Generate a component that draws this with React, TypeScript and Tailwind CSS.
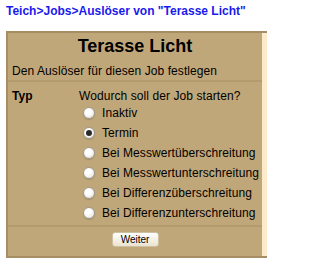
import React from "react";

const options = [
  { label: "Inaktiv", checked: false },
  { label: "Termin", checked: true },
  { label: "Bei Messwertüberschreitung", checked: false },
  { label: "Bei Messwertunterschreitung", checked: false },
  { label: "Bei Differenzüberschreitung", checked: false },
  { label: "Bei Differenzunterschreitung", checked: false },
];

function Radio({ checked }: { checked: boolean }) {
  return (
    <span className="flex h-[12px] w-[12px] shrink-0 items-center justify-center rounded-full border border-[#a09a90] bg-[radial-gradient(circle_at_40%_35%,#ffffff_30%,#dedbd4)] shadow-[0_1px_1px_rgba(0,0,0,0.15)]">
      {checked && <span className="h-[6px] w-[6px] rounded-full bg-[#2a2a2a]" />}
    </span>
  );
}

export default function App() {
  return (
    <div className="h-[266px] w-[267px] overflow-hidden bg-white font-['Liberation_Sans',Arial,sans-serif] text-black">
      {/* Breadcrumb */}
      <div className="pl-[6px] pt-[4px] text-[12px] font-bold leading-[14px] text-[#1a1aee]">
        Teich&gt;Jobs&gt;Auslöser von "Terasse Licht"
      </div>

      {/* Trigger box */}
      <div className="ml-[6px] mt-[13px] flex w-[280px] border-y-2 border-l-2 border-[#a68d63] bg-[#fdeacb]">
        <div className="flex w-[254px] flex-col gap-[2px] bg-[#b39b70] tracking-[0.08px]">
          {/* Header */}
          <div className="h-[47px] bg-[#c0a77a] pt-[3px]">
            <h1 className="text-center text-[18px] font-bold leading-[20px] tracking-normal">Terasse Licht</h1>
            <p className="mt-[8px] pl-[4px] text-[12px] leading-[14px]">
              Den Auslöser für diesen Job festlegen
            </p>
          </div>

          {/* Type */}
          <div className="flex h-[143px] bg-[#c0a77a] pl-[4px] pt-[7px]">
            <div className="w-[67px] text-[12px] font-bold leading-[14px]">Typ</div>
            <div className="flex flex-col">
              <div className="text-[12px] leading-[14px]">Wodurch soll der Job starten?</div>
              {options.map((o) => (
                <label key={o.label} className="flex h-[20px] items-center gap-[7px] pl-[4px] text-[12px] leading-[14px]">
                  <Radio checked={o.checked} />
                  {o.label}
                </label>
              ))}
            </div>
          </div>

          {/* Submit */}
          <div className="flex h-[29px] justify-center bg-[#c0a77a] pt-[5px]">
            <button className="h-[15px] w-[47px] rounded-[3px] border border-[#cdbf9f] bg-gradient-to-b from-white to-[#ebe3cf] text-[10px] leading-[13px] tracking-normal text-black">
              Weiter
            </button>
          </div>
        </div>
      </div>
    </div>
  );
}
